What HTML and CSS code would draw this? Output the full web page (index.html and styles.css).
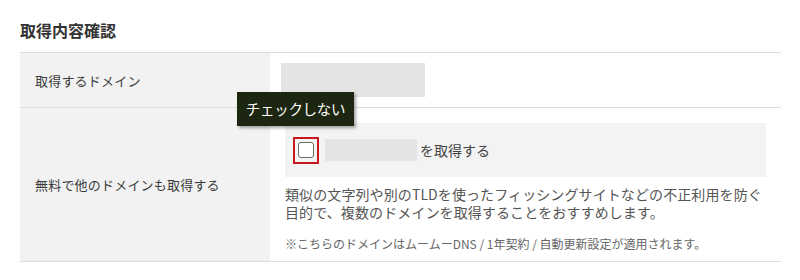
FILE: index.html
```html
<!DOCTYPE html>
<html lang="ja">
<head>
<meta charset="utf-8">
<link rel="stylesheet" href="styles.css">
</head>
<body>
<div class="page">
  <h2 class="title">取得内容確認</h2>
  <div class="table">
    <div class="row row-domain">
      <div class="label">取得するドメイン</div>
      <div class="value value-domain"><div class="ph ph-domain"></div></div>
    </div>
    <div class="row">
      <div class="label">無料で他のドメインも取得する</div>
      <div class="value value-extra">
        <div class="choice">
          <span class="check-wrap">
            <span class="checkbox"></span>
            <span class="tooltip">チェックしない</span>
          </span>
          <span class="ph ph-name"></span>
          <span class="choice-text">を取得する</span>
        </div>
        <p class="desc">類似の文字列や別のTLDを使ったフィッシングサイトなどの不正利用を防ぐ目的で、複数のドメインを取得することをおすすめします。</p>
        <p class="note">※こちらのドメインはムームーDNS / 1年契約 / 自動更新設定が適用されます。</p>
      </div>
    </div>
  </div>
</div>
</body>
</html>
```

FILE: styles.css
```css
html, body {
  margin: 0;
  padding: 0;
  background: #fff;
}
body {
  font-family: "Noto Sans CJK JP", "Noto Sans", sans-serif;
  color: #333;
}
.page {
  padding: 18px 19px 0 20px;
}
.title {
  margin: 0 0 10px 0;
  font-size: 16px;
  line-height: 24px;
  font-weight: 700;
  color: #333;
}
.table {
  border-top: 1px solid #dcdcdc;
}
.row {
  display: grid;
  grid-template-columns: 250px 1fr;
  border-bottom: 1px solid #dcdcdc;
}
.label {
  background: #f2f2f2;
  display: flex;
  align-items: center;
  padding-left: 15px;
  font-size: 13px;
  letter-spacing: 0.2px;
  color: #3a3a3a;
}
.value-domain {
  height: 54px;
  display: flex;
  align-items: center;
  padding-left: 11px;
}
.ph {
  background: #e4e4e4;
  display: block;
}
.ph-domain {
  width: 144px;
  height: 34px;
}
.value-extra {
  padding: 15px 15px 8px 15px;
}
.choice {
  position: relative;
  height: 54px;
  background: #f3f3f3;
  display: flex;
  align-items: center;
  padding-left: 8px;
}
.check-wrap {
  position: relative;
  border: 2px solid #c8161d;
  padding: 3px;
  display: block;
  height: 17px;
}
.checkbox {
  display: block;
  width: 14px;
  height: 14px;
  border: 1.5px solid #6a6a6a;
  border-radius: 3px;
  background: #fff;
}
.tooltip {
  position: absolute;
  left: -58px;
  top: -47px;
  width: 117px;
  height: 34px;
  box-sizing: border-box;
  background: #1d2611;
  color: #fff;
  font-size: 14.5px;
  line-height: 34px;
  text-align: center;
  white-space: nowrap;
  box-shadow: 2px 2px 3px rgba(0, 0, 0, 0.35);
  letter-spacing: -0.3px;
}
.ph-name {
  width: 92px;
  height: 22px;
  margin-left: 6px;
}
.choice-text {
  margin-left: 3px;
  font-size: 14px;
  color: #444;
}
.desc {
  margin: 8px 0 0 0;
  font-size: 14px;
  line-height: 18px;
  letter-spacing: 0.1px;
  color: #555;
}
.note {
  margin: 14px 0 0 0;
  font-size: 12px;
  line-height: 18px;
  color: #666;
}
```
